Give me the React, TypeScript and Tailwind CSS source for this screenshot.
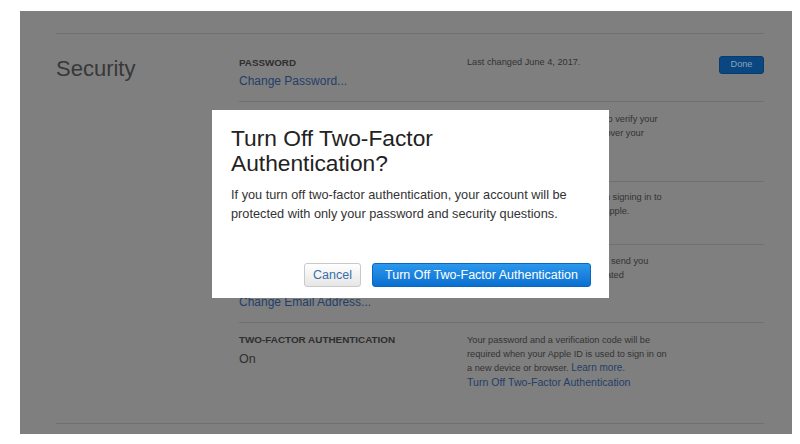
import React from "react";

const Line = ({ children }: { children: React.ReactNode }) => (
  <div className="whitespace-nowrap">{children}</div>
);

export default function App() {
  return (
    <div className="w-[800px] h-[444px] bg-white pt-[11px] pl-[20px] font-['Liberation_Sans',Arial,sans-serif] overflow-hidden">
      <div className="relative w-[772px] h-[423px] bg-[#7f7f7f] pt-[22px] pl-[36px] pr-[28px]">
        {/* Page content (dimmed) */}
        <section className="flex border-t border-b border-[#707070]">
          <div className="w-[183px] shrink-0 pt-[22px]">
            <h2 className="text-[22px] leading-[26px] text-[#383838]">Security</h2>
          </div>
          <div className="flex-1 flex flex-col">
            {/* Password */}
            <div className="h-[68px] border-b border-[#707070] pt-[22px] flex items-start">
              <div className="w-[228px] shrink-0">
                <div className="text-[9.8px] leading-[14px] font-bold text-[#2e2e2e]">PASSWORD</div>
                <div className="mt-[3px] text-[12px] leading-[16px] text-[#1f4068]">Change Password...</div>
              </div>
              <div className="flex-1 text-[9.2px] leading-[14px] text-[#333333] -mt-[1px]">
                Last changed June 4, 2017.
              </div>
              <div className="w-[45px] h-[18px] rounded-[3px] bg-[#0a4780] border border-[#093b6b] text-[9.2px] text-[#8ba3bd] flex items-center justify-center">
                Done
              </div>
            </div>
            {/* Trusted phone numbers */}
            <div className="h-[80px] border-b border-[#707070] pt-[11px] flex items-start">
              <div className="w-[228px] shrink-0" />
              <div className="flex-1 text-[9.2px] leading-[13.5px] text-[#333333]">
                <Line>Trusted phone numbers are used to verify your</Line>
                <Line>identity when signing in and to recover your</Line>
              </div>
            </div>
            {/* Devices */}
            <div className="h-[63px] border-b border-[#707070] pt-[9px] flex items-start">
              <div className="w-[228px] shrink-0" />
              <div className="flex-1 text-[9.2px] leading-[13.5px] text-[#333333]">
                <Line>Codes will be sent to devices when signing in to</Line>
                <Line>your Apple ID or purchasing from Apple.</Line>
              </div>
            </div>
            {/* Rescue email */}
            <div className="h-[78px] border-b border-[#707070] pt-[10px] flex items-start">
              <div className="w-[228px] shrink-0">
                <div className="mt-[39px] text-[12px] leading-[16px] text-[#1f4068]">Change Email Address...</div>
              </div>
              <div className="flex-1 text-[9.2px] leading-[13.5px] text-[#333333]">
                <Line>Apple will use your rescue email to send you</Line>
                <Line>information about your security-related</Line>
              </div>
            </div>
            {/* Two-factor */}
            <div className="h-[100px] pt-[10px] flex items-start">
              <div className="w-[228px] shrink-0">
                <div className="text-[9.9px] leading-[14px] font-bold text-[#2e2e2e]">TWO-FACTOR AUTHENTICATION</div>
                <div className="mt-[4px] text-[12.5px] leading-[16px] text-[#2e2e2e]">On</div>
              </div>
              <div className="flex-1 text-[9.2px] leading-[14px] text-[#333333]">
                <Line>Your password and a verification code will be</Line>
                <Line>required when your Apple ID is used to sign in on</Line>
                <Line>
                  a new device or browser.{" "}
                  <span className="text-[10px] text-[#1f4068]">Learn more.</span>
                </Line>
                <div className="whitespace-nowrap text-[10.6px] text-[#1f4068]">
                  Turn Off Two-Factor Authentication
                </div>
              </div>
            </div>
          </div>
        </section>

        {/* Modal */}
        <div className="absolute left-[192px] top-[99px] w-[397px] h-[188px] bg-white flex flex-col pt-[16px] pl-[19px] pr-[18px] pb-[11px]">
          <h1 className="text-[22.75px] leading-[25px] text-[#222222]">
            Turn Off Two-Factor
            <br />
            Authentication?
          </h1>
          <p className="mt-[9px] text-[12.75px] leading-[19px] text-[#333333]">
            If you turn off two-factor authentication, your account will be
            <br />
            protected with only your password and security questions.
          </p>
          <div className="mt-auto flex justify-end gap-[11px]">
            <button className="w-[57px] h-[24px] rounded-[3px] border border-[#c9c9c9] bg-gradient-to-b from-[#ffffff] to-[#e6e6e6] text-[12.5px] text-[#3a6ea8]">
              Cancel
            </button>
            <button className="w-[219px] h-[24px] rounded-[3px] border border-[#0b66bf] bg-gradient-to-b from-[#2b98ec] to-[#0a6fd0] text-[12.5px] text-white">
              Turn Off Two-Factor Authentication
            </button>
          </div>
        </div>
      </div>
    </div>
  );
}
